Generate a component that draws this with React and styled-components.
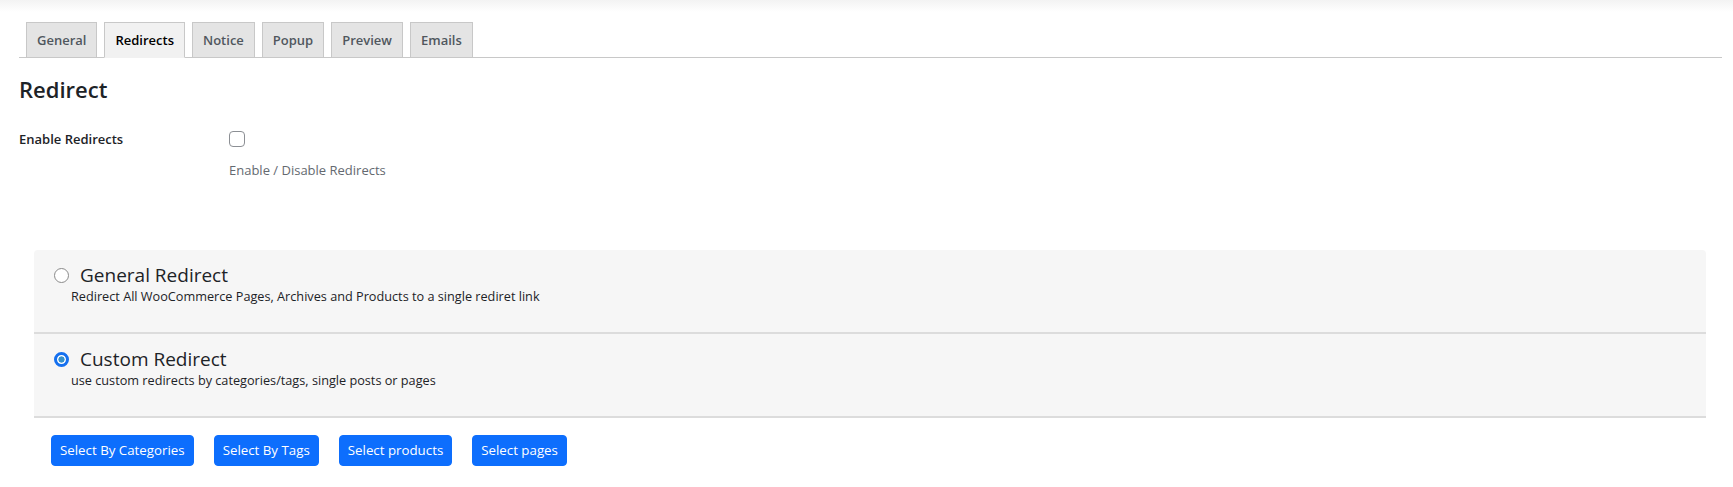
import React, { useState } from 'react';
import styled, { createGlobalStyle } from 'styled-components';

const GlobalStyle = createGlobalStyle`
	html, body {
		margin: 0;
		padding: 0;
		background: #ffffff;
		font-family: 'Open Sans', 'Noto Sans', sans-serif;
		color: #1d2327;
	}
`;

const tabs = ['General', 'Redirects', 'Notice', 'Popup', 'Preview', 'Emails'];

const redirectTypes = [
	{
		id: 'general',
		title: 'General Redirect',
		description:
			'Redirect All WooCommerce Pages, Archives and Products to a single rediret link'
	},
	{
		id: 'custom',
		title: 'Custom Redirect',
		description: 'use custom redirects by categories/tags, single posts or pages'
	}
];

const actions = [
	'Select By Categories',
	'Select By Tags',
	'Select products',
	'Select pages'
];

export default function App() {
	const [activeTab, setActiveTab] = useState('Redirects');
	const [enabled, setEnabled] = useState(false);
	const [mode, setMode] = useState('custom');

	return (
		<>
			<GlobalStyle />
			<TopShade />
			<Wrap>
				<TabBar>
					{tabs.map((tab) => (
						<Tab
							key={tab}
							$active={tab === activeTab}
							onClick={() => setActiveTab(tab)}
						>
							{tab}
						</Tab>
					))}
				</TabBar>

				<Heading>Redirect</Heading>

				<FormRow>
					<FieldLabel>Enable Redirects</FieldLabel>
					<FieldBody>
						<Checkbox
							type="checkbox"
							checked={enabled}
							onChange={() => setEnabled(!enabled)}
						/>
						<Hint>Enable / Disable Redirects</Hint>
					</FieldBody>
				</FormRow>

				<Panel>
					{redirectTypes.map((item) => (
						<Option key={item.id}>
							<OptionHeader>
								<Radio
									$checked={mode === item.id}
									onClick={() => setMode(item.id)}
								/>
								<OptionTitle>{item.title}</OptionTitle>
							</OptionHeader>
							<OptionText>{item.description}</OptionText>
						</Option>
					))}
				</Panel>

				<ButtonRow>
					{actions.map((label) => (
						<PrimaryButton key={label}>{label}</PrimaryButton>
					))}
				</ButtonRow>
			</Wrap>
		</>
	);
}

const TopShade = styled.div`
	height: 12px;
	background: linear-gradient(to bottom, #f3f3f3, #ffffff);
`;

const Wrap = styled.div`
	padding: 10px 11px 0 19px;
`;

const TabBar = styled.div`
	display: flex;
	align-items: flex-end;
	padding-left: 7px;
	border-bottom: 1px solid #c8c8c8;
`;

const Tab = styled.div`
	margin-right: 7px;
	margin-bottom: -1px;
	padding: 5px 10px;
	line-height: 24px;
	font-size: 13px;
	font-weight: 600;
	color: ${(p) => (p.$active ? '#000000' : '#50575e')};
	background: ${(p) => (p.$active ? '#f1f1f1' : '#e4e4e4')};
	border: 1px solid #c8c8c8;
	border-bottom: 1px solid ${(p) => (p.$active ? '#f1f1f1' : '#c8c8c8')};
	cursor: pointer;
`;

const Heading = styled.h2`
	margin: 16px 0 0 0;
	font-size: 22px;
	line-height: 30px;
	font-weight: 600;
	color: #1d2327;
`;

const FormRow = styled.div`
	display: grid;
	grid-template-columns: 210px 1fr;
	margin-top: 20px;
	height: 126px;
`;

const FieldLabel = styled.div`
	font-size: 13px;
	font-weight: 600;
	line-height: 20px;
	padding-top: 5px;
	color: #1d2327;
`;

const FieldBody = styled.div`
	display: flex;
	flex-direction: column;
	align-items: flex-start;
`;

const Checkbox = styled.input`
	appearance: none;
	margin: 7px 0 0 0;
	width: 16px;
	height: 16px;
	border: 1px solid #8c8f94;
	border-radius: 4px;
	background: #ffffff;
	cursor: pointer;
`;

const Hint = styled.p`
	margin: 13px 0 0 0;
	font-size: 13px;
	line-height: 20px;
	color: #646970;
`;

const Panel = styled.div`
	margin: 0 16px 0 15px;
	background: #f6f6f6;
	border-radius: 4px 4px 0 0;
`;

const Option = styled.div`
	padding: 14px 20px 26px 20px;
	border-bottom: 2px solid #dcdcdc;
`;

const OptionHeader = styled.div`
	display: flex;
	align-items: center;
	gap: 11px;
`;

const Radio = styled.span`
	flex: none;
	box-sizing: border-box;
	width: 15px;
	height: 15px;
	border-radius: 50%;
	cursor: pointer;
	border: ${(p) => (p.$checked ? '3px solid #1570ef' : '1px solid #8a8a8a')};
	background: ${(p) =>
		p.$checked
			? 'radial-gradient(circle, #3791c9 0 2.8px, #ffffff 3.4px)'
			: '#ffffff'};
`;

const OptionTitle = styled.span`
	font-size: 19px;
	line-height: 22px;
	font-weight: 500;
	color: #1d2327;
`;

const OptionText = styled.p`
	margin: 0 0 0 17px;
	font-size: 12.7px;
	line-height: 20px;
	color: #1d2327;
`;

const ButtonRow = styled.div`
	display: flex;
	gap: 20px;
	margin: 17px 0 0 32px;
`;

const PrimaryButton = styled.button`
	padding: 4px 8px;
	font-family: inherit;
	font-size: 13.3px;
	line-height: 21px;
	color: #ffffff;
	background: #0d6efd;
	border: 1px solid #0d6efd;
	border-radius: 4px;
	cursor: pointer;
`;
